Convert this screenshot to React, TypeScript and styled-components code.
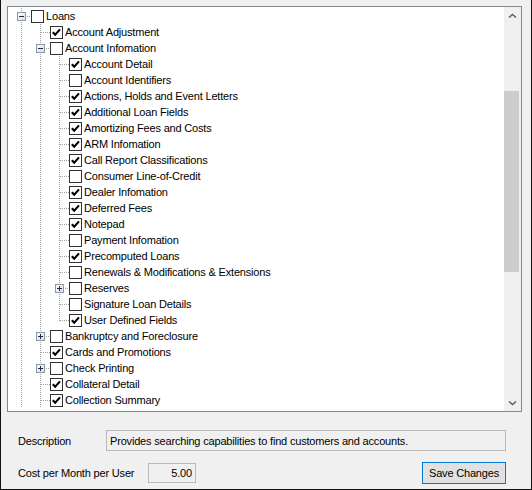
import React from "react";
import styled, {createGlobalStyle} from "styled-components";

const GlobalStyle = createGlobalStyle`
  html, body {
    margin: 0;
    padding: 0;
    background: #ffffff;
  }
  body {
    font-family: "Liberation Sans", Arial, sans-serif;
    font-size: 11px;
    letter-spacing: -0.18px;
    color: #000000;
  }
`;

const Window = styled.div`
  box-sizing: border-box;
  width: 532px;
  height: 490px;
  background: #f0f0f0;
  border: 1px solid #111111;
  border-top: none;
  padding: 6px 9px 0 6px;
  display: flex;
  flex-direction: column;
`;

const TreeBox = styled.div`
  box-sizing: border-box;
  height: 406px;
  border: 1px solid #828790;
  background: #ffffff;
  display: flex;
`;

const TreeList = styled.div`
  flex: 1;
  padding: 1px 0 0 4px;
  overflow: hidden;
`;

const Row = styled.div`
  display: flex;
  height: 16px;
  white-space: nowrap;
`;

const Guide = styled.svg`
  flex: none;
  display: block;
`;

const Check = styled.span`
  box-sizing: border-box;
  flex: none;
  width: 13px;
  height: 13px;
  margin-top: 2px;
  border: 1px solid #333333;
  background: #ffffff;
  display: flex;
  align-items: center;
  justify-content: center;
`;

const Label = styled.span`
  margin-left: 2px;
  line-height: 16px;
`;

const ScrollBar = styled.div`
  flex: none;
  width: 17px;
  background: #f0f0f0;
  display: flex;
  flex-direction: column;
`;

const ArrowButton = styled.div`
  height: 17px;
  display: flex;
  align-items: center;
  justify-content: center;
  flex: none;
`;

const Track = styled.div`
  flex: 1;
  display: flex;
  flex-direction: column;
`;

const Thumb = styled.div`
  margin-top: 67px;
  width: 15px;
  height: 181px;
  background: #cdcdcd;
`;

const Form = styled.div`
  margin-top: 18px;
  padding: 0 16px 0 11px;
  display: flex;
  flex-direction: column;
  gap: 11px;
`;

const FieldRow = styled.div<{$height: number}>`
  display: flex;
  align-items: center;
  height: ${p => p.$height}px;
`;

const FieldLabel = styled.div<{$width: number}>`
  flex: none;
  width: ${p => p.$width}px;
`;

const ReadOnlyBox = styled.div<{$align?: string}>`
  box-sizing: border-box;
  height: ${p => (p.$align === "right" ? 20 : 21)}px;
  border: 1px solid #b9b9b9;
  background: #f0f0f0;
  display: flex;
  align-items: center;
  justify-content: ${p => (p.$align === "right" ? "flex-end" : "flex-start")};
  padding: 0 3px 0 3px;
`;

const DescriptionBox = styled(ReadOnlyBox)`
  flex: 1;
`;

const CostBox = styled(ReadOnlyBox)`
  width: 48px;
  flex: none;
`;

const SaveButton = styled.button`
  box-sizing: border-box;
  margin-left: auto;
  width: 84px;
  height: 22px;
  border: 1px solid #0078d7;
  background: #e1e1e1;
  font-family: "Liberation Sans", Arial, sans-serif;
  font-size: 11px;
  letter-spacing: -0.18px;
  color: #000000;
  padding: 0;
`;

type Item = {
  label: string;
  level: number;
  checked?: boolean;
  expand?: "open" | "closed";
};

const items: Item[] = [
  {label: "Loans", level: 0, expand: "open"},
  {label: "Account Adjustment", level: 1, checked: true},
  {label: "Account Infomation", level: 1, expand: "open"},
  {label: "Account Detail", level: 2, checked: true},
  {label: "Account Identifiers", level: 2},
  {label: "Actions, Holds and Event Letters", level: 2, checked: true},
  {label: "Additional Loan Fields", level: 2, checked: true},
  {label: "Amortizing Fees and Costs", level: 2, checked: true},
  {label: "ARM Infomation", level: 2, checked: true},
  {label: "Call Report Classifications", level: 2, checked: true},
  {label: "Consumer Line-of-Credit", level: 2},
  {label: "Dealer Infomation", level: 2, checked: true},
  {label: "Deferred Fees", level: 2, checked: true},
  {label: "Notepad", level: 2, checked: true},
  {label: "Payment Infomation", level: 2},
  {label: "Precomputed Loans", level: 2, checked: true},
  {label: "Renewals & Modifications & Extensions", level: 2},
  {label: "Reserves", level: 2, expand: "closed"},
  {label: "Signature Loan Details", level: 2},
  {label: "User Defined Fields", level: 2, checked: true},
  {label: "Bankruptcy and Foreclosure", level: 1, expand: "closed"},
  {label: "Cards and Promotions", level: 1, checked: true},
  {label: "Check Printing", level: 1, expand: "closed"},
  {label: "Collateral Detail", level: 1, checked: true},
  {label: "Collection Summary", level: 1, checked: true},
];

// the list is scrolled, so running off the end means more siblings follow
function hasNext(i: number) {
  for (let j = i + 1; j < items.length; j++) {
    if (items[j].level < items[i].level) return false;
    if (items[j].level === items[i].level) return true;
  }
  return true;
}

function ancestorContinues(i: number, level: number) {
  for (let j = i - 1; j >= 0; j--) {
    if (items[j].level === level) return hasNext(j);
  }
  return true;
}

const LINE = "#a0a0a0";

function PassLine({on}: {on: boolean}) {
  return (
    <Guide width={19} height={16} shapeRendering="crispEdges">
      {on && <line x1={9.5} y1={0} x2={9.5} y2={16} stroke={LINE} strokeDasharray="1 1" />}
    </Guide>
  );
}

function OwnCell({item, next}: {item: Item; next: boolean}) {
  return (
    <Guide width={19} height={16} shapeRendering="crispEdges">
      <defs>
        <linearGradient id="exp" x1="0" y1="0" x2="1" y2="1">
          <stop offset="0" stopColor="#ffffff" />
          <stop offset="1" stopColor="#d6dce4" />
        </linearGradient>
      </defs>
      {item.expand ? (
        <>
          <line x1={9.5} y1={0} x2={9.5} y2={4} stroke={LINE} strokeDasharray="1 1" />
          {next && <line x1={9.5} y1={14} x2={9.5} y2={16} stroke={LINE} strokeDasharray="1 1" />}
          <line x1={15} y1={8.5} x2={19} y2={8.5} stroke={LINE} strokeDasharray="1 1" />
          <rect x={5.5} y={4.5} width={8} height={8} fill="url(#exp)" stroke="#8e99a8" />
          <line x1={7} y1={8.5} x2={12} y2={8.5} stroke="#1f2a44" />
          {item.expand === "closed" && (
            <line x1={9.5} y1={6} x2={9.5} y2={11} stroke="#1f2a44" />
          )}
        </>
      ) : (
        <>
          <line x1={9.5} y1={0} x2={9.5} y2={next ? 16 : 9} stroke={LINE} strokeDasharray="1 1" />
          <line x1={10} y1={8.5} x2={19} y2={8.5} stroke={LINE} strokeDasharray="1 1" />
        </>
      )}
    </Guide>
  );
}

function CheckBox({checked}: {checked?: boolean}) {
  return (
    <Check>
      {checked && (
        <svg width={11} height={11} viewBox="0 0 11 11">
          <polyline points="1.8,5.2 4.2,7.8 9,2.4" fill="none" stroke="#000000" strokeWidth={2.1} />
        </svg>
      )}
    </Check>
  );
}

function Chevron({down}: {down?: boolean}) {
  return (
    <svg width={9} height={6} viewBox="0 0 9 6">
      <polyline
        points={down ? "1,1.5 4.5,4.5 8,1.5" : "1,4.5 4.5,1.5 8,4.5"}
        fill="none"
        stroke="#606060"
        strokeWidth={1.6}
      />
    </svg>
  );
}

function App() {
  return (
    <>
      <GlobalStyle />
      <Window>
        <TreeBox>
          <TreeList>
            {items.map((item, i) => (
              <Row key={item.label}>
                {Array.from({length: item.level}, (_, k) => (
                  <PassLine key={k} on={ancestorContinues(i, k)} />
                ))}
                <OwnCell item={item} next={hasNext(i)} />
                <CheckBox checked={item.checked} />
                <Label>{item.label}</Label>
              </Row>
            ))}
          </TreeList>
          <ScrollBar>
            <ArrowButton><Chevron /></ArrowButton>
            <Track><Thumb /></Track>
            <ArrowButton><Chevron down /></ArrowButton>
          </ScrollBar>
        </TreeBox>

        <Form>
          <FieldRow $height={21}>
            <FieldLabel $width={88}>Description</FieldLabel>
            <DescriptionBox>Provides searching capabilities to find customers and accounts.</DescriptionBox>
          </FieldRow>
          <FieldRow $height={22}>
            <FieldLabel $width={130}>Cost per Month per User</FieldLabel>
            <CostBox $align="right">5.00</CostBox>
            <SaveButton>Save Changes</SaveButton>
          </FieldRow>
        </Form>
      </Window>
    </>
  );
}

export default App;
